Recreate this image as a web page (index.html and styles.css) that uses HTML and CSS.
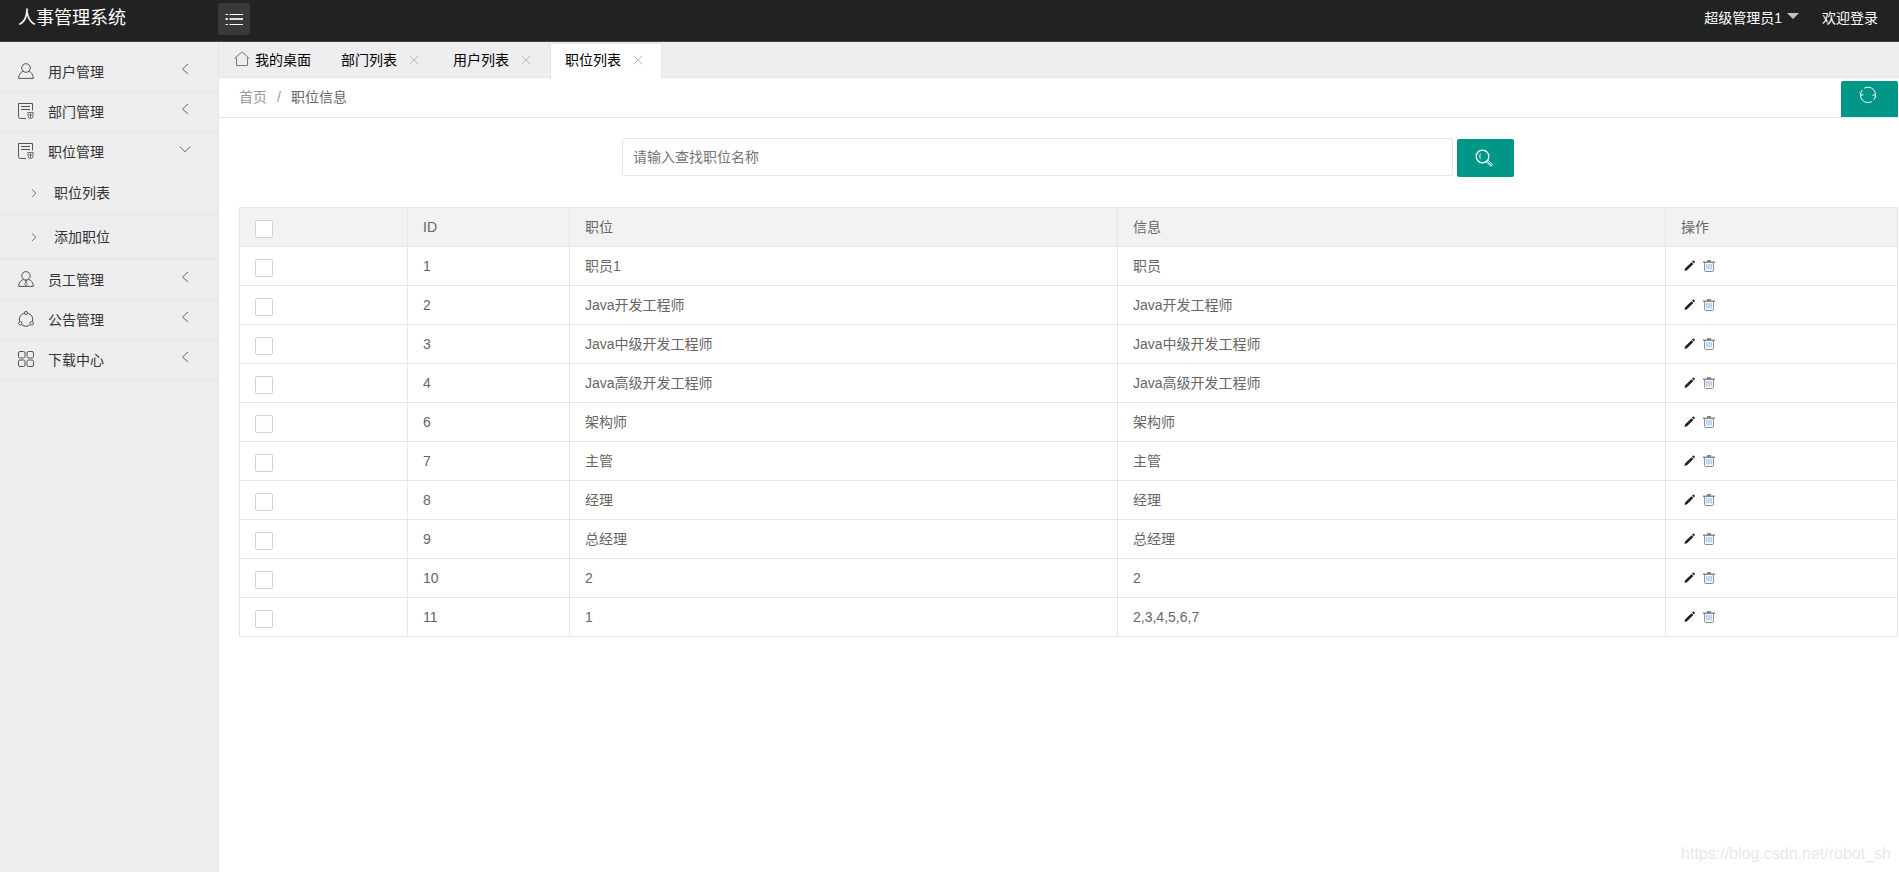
FILE: index.html
```html
<!DOCTYPE html>
<html lang="zh-CN">
<head>
<meta charset="utf-8">
<title>人事管理系统</title>
<link rel="stylesheet" href="styles.css">
</head>
<body>
<svg class="sprite" aria-hidden="true">
  <symbol id="i-user" viewBox="0 0 16 16"><circle cx="8" cy="5" r="4.3"/><path d="M5 8.300C2.400 9.500.8 11.800.6 15.400H15.400C15.200 11.800 13.600 9.500 11 8.300"/></symbol>
  <symbol id="i-staff" viewBox="0 0 16 16"><circle cx="8" cy="4.800" r="4.200"/><path d="M5.500 8.300C2.400 9.500.8 11.800.6 15.400H15.400C15.200 11.800 13.600 9.500 10.500 8.300"/><path stroke-width=".7" d="M7 9.500h2l-.6 1.500.8 3L8 15.200 6.800 14l.8-3z"/></symbol>
  <symbol id="i-form" viewBox="0 0 16 16"><path d="M8 15.500H2.500A2 2 0 0 1 .5 13.500V.5H14.500V7.500"/><path d="M3 3.500h9M3 6.500h9"/><path stroke-width=".8" d="M9.500 9.500h6M10 9.500v3.500a2.500 2.500 0 0 0 5 0V9.500M12.500 10v5M10.500 12h4"/></symbol>
  <symbol id="i-share" viewBox="0 0 16 16"><path d="M5.800 2.200A6.600 6.600 0 0 0 1.600 10.500M10.200 2.200A6.600 6.600 0 0 1 14.400 10.500M4 13.800A6.600 6.600 0 0 0 12 13.800"/><circle cx="8" cy="2" r="1.600"/><circle cx="2.300" cy="12.300" r="1.700"/><circle cx="13.700" cy="12.300" r="1.700"/></symbol>
  <symbol id="i-grid" viewBox="0 0 16 16"><rect x=".5" y=".5" width="6.500" height="6.500" rx="1.500"/><rect x="9" y=".5" width="6.500" height="6.500" rx="1.500"/><rect x=".5" y="9" width="6.500" height="6.500" rx="1.500"/><rect x="9" y="9" width="6.500" height="6.500" rx="1.500"/></symbol>
  <symbol id="i-left" viewBox="0 0 12 12"><path d="M9 1L3.500 6 9 11"/></symbol>
  <symbol id="i-down" viewBox="0 0 12 12"><path d="M.8 3.500L6 8.800l5.200-5.300"/></symbol>
  <symbol id="i-right" viewBox="0 0 12 12"><path d="M4 2.500L8 6.200 4 10"/></symbol>
  <symbol id="i-home" viewBox="0 0 16 16"><path d="M.5 7.500L8 1l7.500 6.500M2.500 6.500V14.500H13.500V6.500"/></symbol>
  <symbol id="i-close" viewBox="0 0 10 10"><path d="M.5.5l9 9M9.500.5l-9 9"/></symbol>
  <symbol id="i-menu" viewBox="0 0 18 12"><path d="M4.500 1.500H18M4.500 11.500H18M.5 1.500h2.500M.5 11.500h2.500"/><path stroke-width="2" stroke-opacity=".85" d="M4.500 6H18M.5 6h2.500"/></symbol>
  <symbol id="i-refresh" viewBox="0 0 18 18"><path d="M5.200 2.200A7.600 7.600 0 0 1 16.500 8.500M12.800 15.600A7.600 7.600 0 0 1 1.500 9.500M3.200 4.200A7.600 7.600 0 0 0 1.500 9.500M14.800 13.600A7.600 7.600 0 0 0 16.500 8.500M1 6.500l1 3 2.500-1M17 11.500l-1-3-2.500 1"/></symbol>
  <symbol id="i-search" viewBox="0 0 18 18"><circle cx="7.500" cy="7.500" r="6.300" stroke-width="1.300"/><path d="M5.800 4.500C4.500 5.500 4.500 8.500 5.500 10"/><path d="M12 12l1.500-.5 3.300 3.300a1.200 1.200 0 0 1-1.700 1.700L11.800 13.300zM13.300 13.300l2.200 2.200"/></symbol>
  <symbol id="i-edit" viewBox="0 0 12 12"><path d="M.5 11.500l.8-3L8.200 1.800l2 2L3.300 10.700zM8.800 1.200l.9-.8a.9.900 0 0 1 1.200 0l.7.700a.9.900 0 0 1 0 1.200l-.8.900z"/></symbol>
  <symbol id="i-trash" viewBox="0 0 12 12"><path stroke-width="1.400" d="M0 2.200H12M4 .7h4"/><path d="M1.600 2.500v8a1 1 0 0 0 1 1h6.800a1 1 0 0 0 1-1v-8"/><path stroke="#7fb0dd" d="M3.900 4v5.500M6 4v5.500M8.100 4v5.500"/></symbol>
</svg>

<header class="header">
  <a class="logo" href="#">人事管理系统</a>
  <button class="toggle" type="button" aria-label="切换菜单"><svg><use href="#i-menu"/></svg></button>
  <nav class="user-nav">
    <a class="user-menu" href="#">超级管理员1<span class="caret"></span></a>
    <a href="#">欢迎登录</a>
  </nav>
</header>

<div class="layout">
  <aside class="sidebar">
    <ul class="menu">
      <li><a class="menu-link" href="#"><svg class="icon"><use href="#i-user"/></svg>用户管理<svg class="arrow"><use href="#i-left"/></svg></a></li>
      <li><a class="menu-link" href="#"><svg class="icon"><use href="#i-form"/></svg>部门管理<svg class="arrow"><use href="#i-left"/></svg></a></li>
      <li><a class="menu-link" href="#"><svg class="icon"><use href="#i-form"/></svg>职位管理<svg class="arrow"><use href="#i-down"/></svg></a>
        <ul class="submenu">
          <li><a class="sub-link" href="#"><svg><use href="#i-right"/></svg>职位列表</a></li>
          <li><a class="sub-link" href="#"><svg><use href="#i-right"/></svg>添加职位</a></li>
        </ul>
      </li>
      <li><a class="menu-link" href="#"><svg class="icon"><use href="#i-staff"/></svg>员工管理<svg class="arrow"><use href="#i-left"/></svg></a></li>
      <li><a class="menu-link" href="#"><svg class="icon"><use href="#i-share"/></svg>公告管理<svg class="arrow"><use href="#i-left"/></svg></a></li>
      <li><a class="menu-link" href="#"><svg class="icon"><use href="#i-grid"/></svg>下载中心<svg class="arrow"><use href="#i-left"/></svg></a></li>
    </ul>
  </aside>

  <main class="main">
    <ul class="tabs">
      <li class="tab tab-home"><svg class="home"><use href="#i-home"/></svg>我的桌面</li>
      <li class="tab">部门列表<button class="close" type="button" aria-label="关闭部门列表"><svg><use href="#i-close"/></svg></button></li>
      <li class="tab">用户列表<button class="close" type="button" aria-label="关闭用户列表"><svg><use href="#i-close"/></svg></button></li>
      <li class="tab active">职位列表<button class="close" type="button" aria-label="关闭职位列表"><svg><use href="#i-close"/></svg></button></li>
    </ul>

    <div class="crumbs">
      <nav class="crumb-path"><a href="#">首页</a><span class="slash">/</span><span>职位信息</span></nav>
      <button class="btn refresh" type="button" aria-label="刷新"><svg><use href="#i-refresh"/></svg></button>
    </div>

    <form class="search">
      <input class="search-input" type="text" placeholder="请输入查找职位名称" aria-label="职位名称">
      <button class="btn search-btn" type="button" aria-label="查找"><svg><use href="#i-search"/></svg></button>
    </form>

    <table class="grid">
      <colgroup><col class="col-check"><col class="col-id"><col><col><col class="col-ops"></colgroup>
      <thead>
        <tr><th><input type="checkbox" aria-label="全选"></th><th>ID</th><th>职位</th><th>信息</th><th>操作</th></tr>
      </thead>
      <tbody>
        <tr><td><input type="checkbox" aria-label="选择 1"></td><td>1</td><td>职员1</td><td>职员</td><td><div class="ops"><a href="#" aria-label="编辑"><svg class="edit"><use href="#i-edit"/></svg></a><a href="#" aria-label="删除"><svg class="trash"><use href="#i-trash"/></svg></a></div></td></tr>
        <tr><td><input type="checkbox" aria-label="选择 2"></td><td>2</td><td>Java开发工程师</td><td>Java开发工程师</td><td><div class="ops"><a href="#" aria-label="编辑"><svg class="edit"><use href="#i-edit"/></svg></a><a href="#" aria-label="删除"><svg class="trash"><use href="#i-trash"/></svg></a></div></td></tr>
        <tr><td><input type="checkbox" aria-label="选择 3"></td><td>3</td><td>Java中级开发工程师</td><td>Java中级开发工程师</td><td><div class="ops"><a href="#" aria-label="编辑"><svg class="edit"><use href="#i-edit"/></svg></a><a href="#" aria-label="删除"><svg class="trash"><use href="#i-trash"/></svg></a></div></td></tr>
        <tr><td><input type="checkbox" aria-label="选择 4"></td><td>4</td><td>Java高级开发工程师</td><td>Java高级开发工程师</td><td><div class="ops"><a href="#" aria-label="编辑"><svg class="edit"><use href="#i-edit"/></svg></a><a href="#" aria-label="删除"><svg class="trash"><use href="#i-trash"/></svg></a></div></td></tr>
        <tr><td><input type="checkbox" aria-label="选择 6"></td><td>6</td><td>架构师</td><td>架构师</td><td><div class="ops"><a href="#" aria-label="编辑"><svg class="edit"><use href="#i-edit"/></svg></a><a href="#" aria-label="删除"><svg class="trash"><use href="#i-trash"/></svg></a></div></td></tr>
        <tr><td><input type="checkbox" aria-label="选择 7"></td><td>7</td><td>主管</td><td>主管</td><td><div class="ops"><a href="#" aria-label="编辑"><svg class="edit"><use href="#i-edit"/></svg></a><a href="#" aria-label="删除"><svg class="trash"><use href="#i-trash"/></svg></a></div></td></tr>
        <tr><td><input type="checkbox" aria-label="选择 8"></td><td>8</td><td>经理</td><td>经理</td><td><div class="ops"><a href="#" aria-label="编辑"><svg class="edit"><use href="#i-edit"/></svg></a><a href="#" aria-label="删除"><svg class="trash"><use href="#i-trash"/></svg></a></div></td></tr>
        <tr><td><input type="checkbox" aria-label="选择 9"></td><td>9</td><td>总经理</td><td>总经理</td><td><div class="ops"><a href="#" aria-label="编辑"><svg class="edit"><use href="#i-edit"/></svg></a><a href="#" aria-label="删除"><svg class="trash"><use href="#i-trash"/></svg></a></div></td></tr>
        <tr><td><input type="checkbox" aria-label="选择 10"></td><td>10</td><td>2</td><td>2</td><td><div class="ops"><a href="#" aria-label="编辑"><svg class="edit"><use href="#i-edit"/></svg></a><a href="#" aria-label="删除"><svg class="trash"><use href="#i-trash"/></svg></a></div></td></tr>
        <tr><td><input type="checkbox" aria-label="选择 11"></td><td>11</td><td>1</td><td>2,3,4,5,6,7</td><td><div class="ops"><a href="#" aria-label="编辑"><svg class="edit"><use href="#i-edit"/></svg></a><a href="#" aria-label="删除"><svg class="trash"><use href="#i-trash"/></svg></a></div></td></tr>
      </tbody>
    </table>

    <div class="watermark">https://blog.csdn.net/robot_sh</div>
  </main>
</div>
</body>
</html>
```
FILE: styles.css
```css
* {
  box-sizing: border-box;
}

body {
  margin: 0;
  min-height: 100vh;
  display: flex;
  flex-direction: column;
  background: #fff;
  color: #666;
  font: 14px/20px "Liberation Sans", "Noto Sans CJK SC", sans-serif;
}

a {
  color: inherit;
  text-decoration: none;
}

ul {
  margin: 0;
  padding: 0;
  list-style: none;
}

button,
input {
  margin: 0;
  padding: 0;
  border: 0;
  font: inherit;
}

button {
  background: none;
  display: flex;
  align-items: center;
  justify-content: center;
}

svg {
  display: block;
  flex: none;
  fill: none;
  stroke: currentColor;
}

.sprite {
  position: absolute;
  width: 0;
  height: 0;
}

/* Header */
.header {
  display: flex;
  align-items: flex-start;
  height: 42px;
  background: #222;
  border-bottom: 1px solid #444;
  color: #fff;
}

.logo {
  width: 218px;
  padding-left: 18px;
  font-size: 18px;
  line-height: 36px;
}

.toggle {
  width: 32px;
  height: 32px;
  margin-top: 3px;
  border-radius: 3px;
  background: #393939;
  color: #fff;
}

.toggle svg {
  width: 18px;
  height: 12px;
}

.user-nav {
  display: flex;
  gap: 23px;
  margin-left: auto;
  padding-right: 21px;
  line-height: 36px;
}

.user-menu {
  display: flex;
}

.caret {
  margin: 13px 0 0 5px;
  border: 6px solid transparent;
  border-top-color: #c2c2c2;
  border-bottom: 0;
  height: 0;
}

/* Sidebar */
.layout {
  display: flex;
  flex: 1;
}

.sidebar {
  flex: none;
  width: 219px;
  padding-top: 10px;
  background: #eee;
  border-right: 1px solid #e5e5e5;
  color: #333;
}

.menu > li {
  border-bottom: 1px solid #e5e5e5;
}

.menu-link {
  display: flex;
  align-items: center;
  height: 39px;
  padding: 0 27px 0 18px;
}

.icon {
  width: 16px;
  height: 16px;
  margin: 0 14px 1px 0;
  color: #555;
}

.arrow {
  width: 12px;
  height: 12px;
  margin: 0 0 5px auto;
  color: #666;
}

.sub-link {
  display: flex;
  align-items: center;
  gap: 14px;
  height: 44px;
  padding-left: 28px;
  border-bottom: 1px solid #e5e5e5;
}

.sub-link svg {
  width: 12px;
  height: 12px;
  color: #777;
}

/* Tabs */
.main {
  flex: 1;
  min-width: 0;
  display: flex;
  flex-direction: column;
}

.tabs {
  display: flex;
  height: 36px;
  padding-top: 1px;
  background: #eeeef0;
  border-bottom: 1px solid #e5e5e5;
  color: #000;
}

.tab {
  display: flex;
  align-items: center;
  height: 33px;
  width: 112px;
  padding: 0 14px;
}

.tab-home {
  width: 108px;
  padding: 0 15px;
}

.active {
  height: 36px;
  margin-left: -1px;
  padding: 0 14px 3px;
  background: #fff;
  border: 1px solid #e5e5e5;
  border-bottom: 0;
  border-radius: 2px 2px 0 0;
}

.home {
  width: 16px;
  height: 16px;
  margin: 0 5px 1px 0;
  color: #777;
}

.close {
  width: 18px;
  height: 18px;
  margin-left: 8px;
  color: #bbb;
  flex: none;
}

.close svg {
  width: 10px;
  height: 10px;
}

/* Breadcrumb */
.crumbs {
  display: flex;
  justify-content: space-between;
  align-items: flex-end;
  height: 40px;
  padding: 0 1px 0 20px;
  border-bottom: 1px solid #e5e5e5;
}

.crumb-path {
  display: flex;
  gap: 10px;
  line-height: 39px;
}

.crumb-path a,
.slash {
  color: #999;
}

.btn {
  width: 57px;
  height: 38px;
  background: #009688;
  border-radius: 2px;
  color: #fff;
}

.btn svg {
  width: 18px;
  height: 18px;
  margin-right: 3px;
}

.refresh {
  height: 36px;
  padding-bottom: 8px;
  border-radius: 2px 2px 0 0;
}

/* Search */
.search {
  display: flex;
  justify-content: center;
  align-items: flex-start;
  gap: 4px;
  padding: 20px 0 30px 18px;
}

.search-input {
  width: 50%;
  height: 38px;
  padding: 0 10px;
  border: 1px solid #e6e6e6;
  border-radius: 2px;
  background: #fff;
}

.search-input::placeholder {
  color: #757575;
}

.search-btn {
  margin-top: 1px;
}

/* Table */
.grid {
  width: calc(100% - 21px);
  margin: 0 1px 0 20px;
  table-layout: fixed;
  border-collapse: collapse;
}

.col-check {
  width: 168px;
}

.col-id {
  width: 162px;
}

.col-ops {
  width: 232px;
}

.grid th,
.grid td {
  height: 39px;
  padding: 0 15px;
  border: 1px solid #e6e6e6;
  text-align: left;
  font-weight: 400;
}

.grid th {
  background: #f2f2f2;
}

.grid input {
  appearance: none;
  display: block;
  width: 18px;
  height: 18px;
  margin-top: 4px;
  border: 1px solid #d2d2d2;
  border-radius: 2px;
  background: #fff;
}

.ops {
  display: flex;
  gap: 8px;
  padding-left: 3px;
}

.edit,
.trash {
  width: 12px;
  height: 12px;
}

.edit {
  width: 11px;
  fill: #222;
  stroke: none;
}

.trash {
  color: #888;
}

.watermark {
  margin: auto 8px 8px auto;
  color: #e8e8e8;
  font-size: 16px;
}
```
